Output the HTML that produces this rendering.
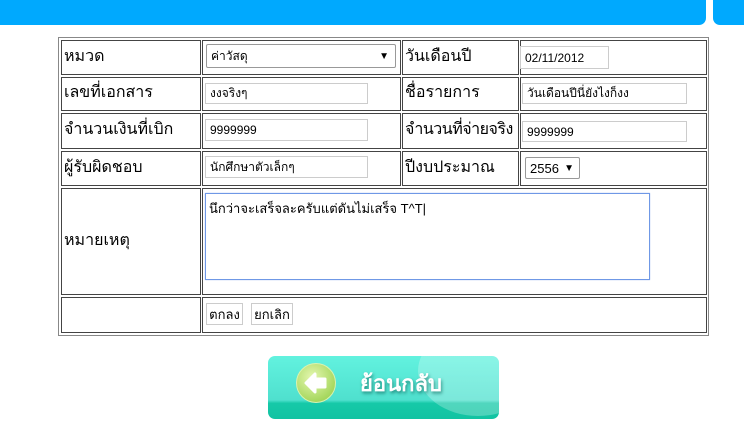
<!DOCTYPE html>
<html><head><meta charset="utf-8"><style>
body{margin:0;width:744px;height:442px;background:#fff;position:relative;overflow:hidden;font-family:"Liberation Sans","Noto Sans CJK SC",sans-serif;}
.a{position:absolute;box-sizing:border-box}
.c{border:1px solid #444}
.l{font-size:16px;color:#000;padding-left:2px;display:flex;align-items:center;padding-bottom:3px}
.in{border:1px solid #ccc;font-size:12px;padding-left:4px;display:flex;align-items:center;color:#000;background:#fff}
.bt{border:1px solid #ccc;font-size:13px;display:flex;align-items:center;justify-content:center;background:#fff}
</style></head><body>
<div class="a" style="left:0;top:0;width:706px;height:25px;background:#00a9fe;border-bottom-right-radius:7px"></div>
<div class="a" style="left:713px;top:0;width:31px;height:25px;background:#00a9fe;border-bottom-left-radius:7px"></div>

<div class="a" style="left:58px;top:37px;width:651px;height:299px;border:1px solid #888"></div>

<div class="a c l" style="left:61px;top:40px;width:140px;height:35px">หมวด</div>
<div class="a c" style="left:202px;top:40px;width:199px;height:35px"></div>
<div class="a c l" style="left:402px;top:40px;width:117px;height:35px">วันเดือนปี</div>
<div class="a c" style="left:520px;top:40px;width:187px;height:35px"></div>

<div class="a c l" style="left:61px;top:77px;width:140px;height:34px">เลขที่เอกสาร</div>
<div class="a c" style="left:202px;top:77px;width:199px;height:34px"></div>
<div class="a c l" style="left:402px;top:77px;width:117px;height:34px">ชื่อรายการ</div>
<div class="a c" style="left:520px;top:77px;width:187px;height:34px"></div>

<div class="a c l" style="left:61px;top:113px;width:140px;height:36px">จำนวนเงินที่เบิก</div>
<div class="a c" style="left:202px;top:113px;width:199px;height:36px"></div>
<div class="a c l" style="left:402px;top:113px;width:117px;height:36px;letter-spacing:-0.5px">จำนวนที่จ่ายจริง</div>
<div class="a c" style="left:520px;top:113px;width:187px;height:36px"></div>

<div class="a c l" style="left:61px;top:151px;width:140px;height:35px">ผู้รับผิดชอบ</div>
<div class="a c" style="left:202px;top:151px;width:199px;height:35px"></div>
<div class="a c l" style="left:402px;top:151px;width:117px;height:35px">ปีงบประมาณ</div>
<div class="a c" style="left:520px;top:151px;width:187px;height:35px"></div>

<div class="a c l" style="left:61px;top:188px;width:140px;height:107px">หมายเหตุ</div>
<div class="a c" style="left:202px;top:188px;width:505px;height:107px"></div>

<div class="a c" style="left:61px;top:297px;width:140px;height:36px"></div>
<div class="a c" style="left:202px;top:297px;width:505px;height:36px"></div>

<div class="a in" style="left:206px;top:44px;width:190px;height:24px;border-color:#999;border-radius:2px;justify-content:space-between;padding-right:6px">ค่าวัสดุ<span style="font-size:10px">▼</span></div>
<div class="a in" style="left:520px;top:46px;width:89px;height:23px">02/11/2012</div>
<div class="a in" style="left:205px;top:83px;width:163px;height:21px">งงจริงๆ</div>
<div class="a in" style="left:522px;top:83px;width:165px;height:21px">วันเดือนปีนี่ยังไงก็งง</div>
<div class="a in" style="left:205px;top:119px;width:163px;height:22px">9999999</div>
<div class="a in" style="left:522px;top:121px;width:165px;height:21px">9999999</div>
<div class="a in" style="left:205px;top:156px;width:163px;height:22px">นักศึกษาตัวเล็กๆ</div>
<div class="a in" style="left:525px;top:157px;width:55px;height:22px;border-color:#999;border-radius:2px;font-size:13px;justify-content:space-between;padding-right:5px">2556<span style="font-size:10px">▼</span></div>
<div class="a" style="left:205px;top:193px;width:445px;height:87px;border:1px solid #6f98e6;box-shadow:0 0 1px #9bb9f0;font-size:13px;padding:4px 3px">นึกว่าจะเสร็จละครับแต่ดันไม่เสร็จ T^T|</div>
<div class="a bt" style="left:206px;top:303px;width:37px;height:22px">ตกลง</div>
<div class="a bt" style="left:251px;top:303px;width:42px;height:22px">ยกเลิก</div>

<div class="a" style="left:268px;top:356px;width:231px;height:63px;border-radius:7px;background:linear-gradient(#62f2df,#4fe0ce 70%,#16c9a8 75%,#12c3a2);overflow:hidden">
<div class="a" style="left:150px;top:-30px;width:120px;height:90px;border-radius:50%;background:rgba(255,255,255,0.25)"></div>
<div class="a" style="left:28px;top:7px;width:40px;height:40px;border-radius:50%;background:radial-gradient(circle at 40% 35%,#e5f7b0,#a8d860 70%,#8cc44a);border:1px solid #d9f2b0"></div>
<svg class="a" style="left:34px;top:14px" width="28" height="26" viewBox="0 0 28 26"><path d="M4 13 L13 4 L13 9 L23 9 L23 17 L13 17 L13 22 Z" fill="#fff" stroke="#fff" stroke-width="3" stroke-linejoin="round"/></svg>
<div class="a" style="left:92px;top:10px;font-size:22px;color:#fff;font-weight:bold;text-shadow:1px 2px 3px rgba(0,80,70,0.6)">ย้อนกลับ</div>
</div>
</body></html>
